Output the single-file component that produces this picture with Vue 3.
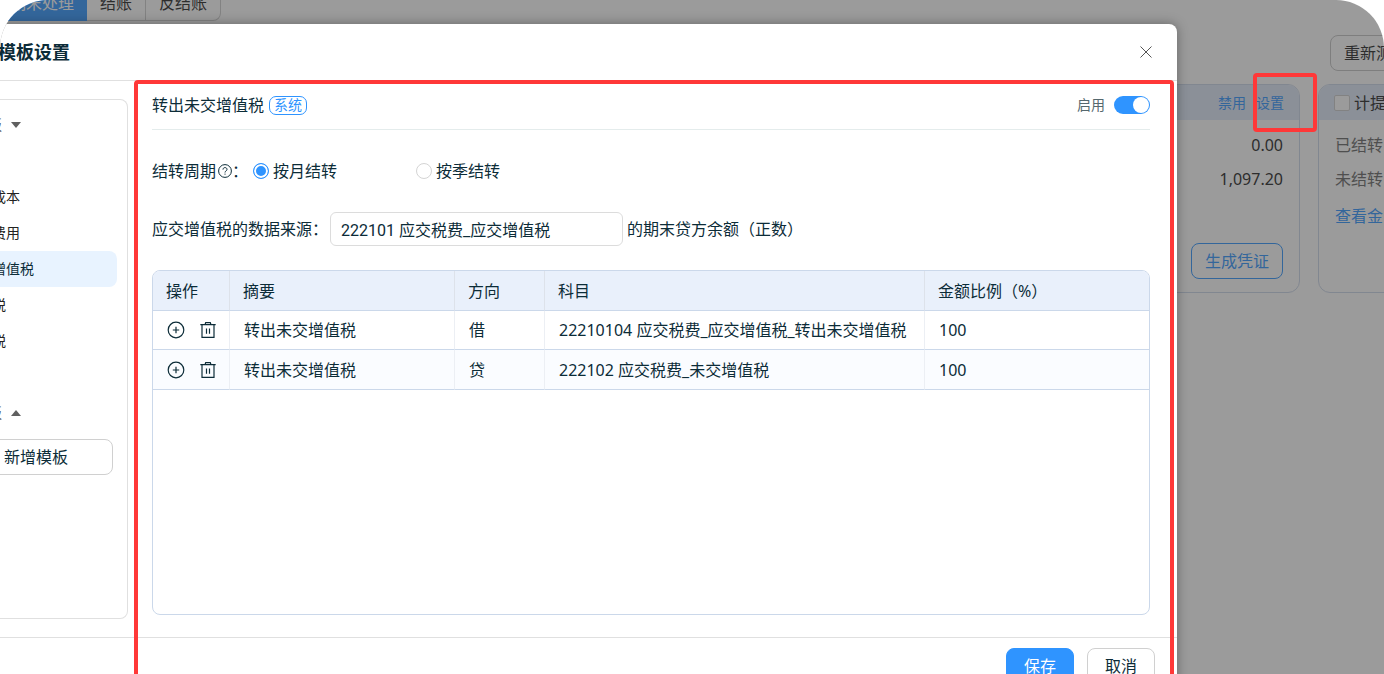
<script setup>
import { ref } from 'vue'

const enabled = ref(true)
const period = ref('month')
const source = ref('222101 应交税费_应交增值税')
const systemItems = ['成本', '费用', '增值税', '税', '税']
const activeItem = ref(2)
const rows = [
  { summary: '转出未交增值税', side: '借', subject: '22210104 应交税费_应交增值税_转出未交增值税', ratio: '100' },
  { summary: '转出未交增值税', side: '贷', subject: '222102 应交税费_未交增值税', ratio: '100' },
]
</script>

<template>
  <div class="screen">
    <div class="page">
      <nav class="tabs">
        <button class="tab on" type="button">期末处理</button>
        <button class="tab" type="button">结账</button>
        <button class="tab" type="button">反结账</button>
      </nav>
      <div class="toolbar">
        <button class="plain" type="button">重新测</button>
      </div>
      <div class="cards">
        <section class="card">
          <header class="card-head links">
            <a href="#">禁用</a>
            <a href="#">设置</a>
          </header>
          <div class="card-body amounts">
            <p>0.00</p>
            <p>1,097.20</p>
            <button class="outline" type="button">生成凭证</button>
          </div>
        </section>
        <section class="card">
          <header class="card-head">
            <label class="pick"><input type="checkbox" />计提</label>
          </header>
          <div class="card-body">
            <p class="muted">已结转</p>
            <p class="muted">未结转</p>
            <p class="more"><a href="#">查看金</a></p>
          </div>
        </section>
      </div>
    </div>

    <div class="mask">
      <div class="modal" role="dialog" aria-labelledby="dlg-title">
        <header class="modal-head">
          <h2 id="dlg-title">模板设置</h2>
          <button class="close" type="button" aria-label="关闭">
            <svg viewBox="0 0 12 12" width="12" height="12"><path d="M.5.5 11.5 11.5M11.5.5.5 11.5" /></svg>
          </button>
        </header>

        <div class="modal-body">
          <aside class="side">
            <button class="group" type="button">板
              <svg viewBox="0 0 10 6" width="10" height="6"><path d="M0 0h10L5 6z" /></svg>
            </button>
            <ul>
              <li v-for="(name, i) in systemItems" :key="i">
                <a href="#" :class="{ current: i === activeItem }" @click.prevent="activeItem = i">{{ name }}</a>
              </li>
            </ul>
            <button class="group" type="button">板
              <svg viewBox="0 0 10 6" width="10" height="6"><path d="M0 6h10L5 0z" /></svg>
            </button>
            <button class="add" type="button">新增模板</button>
          </aside>

          <main class="main">
            <div class="title-row">
              <span>转出未交增值税</span>
              <span class="tag">系统</span>
              <label class="switch">启用<input v-model="enabled" type="checkbox" role="switch" /></label>
            </div>

            <div class="period">
              <span>结转周期</span>
              <svg class="help" viewBox="0 0 14 14" width="14" height="14">
                <circle cx="7" cy="7" r="6.4" />
                <path d="M5 5.6C5 4.3 5.8 3.6 7 3.6s2 .7 2 1.8c0 1.5-2 1.5-2 3.1M7 9.6v1.1" />
              </svg>
              <span class="colon">：</span>
              <label><input v-model="period" type="radio" name="period" value="month" />按月结转</label>
              <label><input v-model="period" type="radio" name="period" value="quarter" />按季结转</label>
            </div>

            <div class="source">
              <label for="source">应交增值税的数据来源：</label>
              <input id="source" v-model="source" type="text" />
              <span>的期末贷方余额（正数）</span>
            </div>

            <div class="table-box">
              <table>
                <colgroup>
                  <col class="c-op" /><col class="c-sum" /><col class="c-side" /><col class="c-subj" /><col />
                </colgroup>
                <thead>
                  <tr><th>操作</th><th>摘要</th><th>方向</th><th>科目</th><th>金额比例（%）</th></tr>
                </thead>
                <tbody>
                  <tr v-for="(row, i) in rows" :key="i">
                    <td>
                      <div class="ops">
                        <button type="button" aria-label="新增">
                          <svg viewBox="0 0 18 18" width="18" height="18">
                            <circle cx="9" cy="9" r="7.8" /><path d="M9 5.8v6.4M5.8 9h6.4" />
                          </svg>
                        </button>
                        <button type="button" aria-label="删除">
                          <svg viewBox="0 0 18 18" width="18" height="18">
                            <path d="M1.3 3.7h15.4M6 3.6l.7-2h4.6l.7 2M3 4v12.3h12V4M7.5 7.4v5.4M10.5 7.4v5.4" />
                          </svg>
                        </button>
                      </div>
                    </td>
                    <td>{{ row.summary }}</td>
                    <td>{{ row.side }}</td>
                    <td>{{ row.subject }}</td>
                    <td>{{ row.ratio }}</td>
                  </tr>
                </tbody>
              </table>
            </div>
          </main>
        </div>

        <footer class="modal-foot">
          <button class="save" type="button">保存</button>
          <button class="cancel" type="button">取消</button>
        </footer>
        <div class="marker marker-panel"></div>
      </div>
    </div>
    <div class="marker marker-link"></div>
  </div>
</template>

<style>
body {
  background: #fff;
}
</style>

<style scoped>
* {
  box-sizing: border-box;
}
.screen {
  position: relative;
  height: 100vh;
  overflow: hidden;
  border-radius: 48px 48px 0 0;
  font: 16px/24px "Noto Sans", "Noto Sans CJK SC", sans-serif;
  color: #0c2c38;
  white-space: nowrap;
}
button,
input {
  font: inherit;
  color: inherit;
  margin: 0;
}
button {
  padding: 0;
  border: 0;
  background: none;
  cursor: pointer;
}
a {
  color: #2f94ff;
  text-decoration: none;
}
p,
h2,
ul {
  margin: 0;
  padding: 0;
}
svg {
  display: block;
  fill: none;
  stroke: currentColor;
}

/* page under the dialog */
.page {
  height: 100%;
  background: #fff;
  color: #222;
}
.tabs {
  display: flex;
  margin-top: -15px;
}
.tab {
  height: 36px;
  padding: 0 13px;
  border: 1px solid #ccc;
  border-left: 0;
}
.tab:last-child {
  border-radius: 0 8px 8px 0;
}
.tab.on {
  padding: 0 12px 0 10px;
  background: #2f94ff;
  border-color: #2f94ff;
  color: #fff;
}
.toolbar {
  display: flex;
  justify-content: flex-end;
  margin: 14px -22px 0 0;
}
.plain {
  height: 36px;
  padding: 0 13px;
  border: 1px solid #c4c4c4;
  border-radius: 8px;
}
.cards {
  display: flex;
  justify-content: flex-end;
  gap: 18px;
  margin: 13px -234px 0 0;
}
.card {
  width: 300px;
  border: 1px solid #cbd6e8;
  border-radius: 12px;
  overflow: hidden;
}
.card-head {
  display: flex;
  align-items: center;
  height: 35px;
  padding: 0 15px;
  background: #dfe9f8;
}
.links {
  justify-content: flex-end;
  gap: 10px;
  font-size: 14px;
}
.pick {
  display: flex;
  align-items: center;
  gap: 4px;
}
.pick input {
  appearance: none;
  width: 16px;
  height: 16px;
  border: 1px solid #ccc;
  border-radius: 2px;
  background: #fff;
}
.card-body {
  display: flex;
  flex-direction: column;
  gap: 10px;
  height: 172px;
  padding: 13px 16px;
}
.muted {
  color: #666;
}
.more {
  margin-top: 3px;
}
.amounts {
  align-items: flex-end;
}
.outline {
  height: 36px;
  margin-top: auto;
  padding: 0 13px;
  border: 1px solid #2f94ff;
  border-radius: 8px;
  color: #2f94ff;
}

/* dialog */
.mask {
  position: absolute;
  inset: 0;
  padding-top: 24px;
  background: rgba(55, 55, 55, 0.5);
}
.modal {
  position: relative;
  margin: 0 207px 0 -12px;
  background: #fff;
  border-radius: 0 8px 0 0;
  box-shadow: 0 0 12px rgba(0, 0, 0, 0.35);
}
.modal-head {
  display: flex;
  align-items: center;
  justify-content: space-between;
  height: 57px;
  padding: 0 25px 0 10px;
  border-bottom: 1px solid #e0e0e0;
}
.modal-head h2 {
  font-size: 18px;
  line-height: 24px;
  font-weight: 700;
}
.close {
  color: #555;
}
.modal-body {
  display: flex;
  gap: 24px;
  padding: 0 27px 18px 0;
}
.side {
  flex: none;
  width: 140px;
  margin-top: 18px;
  padding-top: 7px;
  border: 1px solid #e0e0e0;
  border-left: 0;
  border-radius: 0 8px 8px 0;
  font-size: 14px;
}
.group {
  display: flex;
  align-items: center;
  gap: 9px;
  height: 36px;
  color: #555;
}
.group svg {
  fill: #606060;
  stroke: none;
}
.side ul {
  margin: 36px 10px 36px 0;
  list-style: none;
}
.side li a {
  display: block;
  height: 36px;
  padding-left: 4px;
  border-radius: 8px;
  line-height: 36px;
  color: #222;
}
.side li a.current {
  background: #e8f3ff;
  color: #0c2c38;
}
.add {
  width: 125px;
  height: 36px;
  margin-top: 8px;
  padding-left: 15px;
  border: 1px solid #d0d0d0;
  border-radius: 8px;
  font-size: 16px;
  text-align: left;
}
.main {
  flex: 1;
  min-width: 0;
  padding-bottom: 4px;
}
.title-row {
  display: flex;
  align-items: center;
  height: 49px;
  border-bottom: 1px solid #e4ecec;
}
.tag {
  height: 19px;
  margin-left: 5px;
  padding: 0 4px;
  border: 1px solid #2f94ff;
  border-radius: 7px;
  font-size: 14px;
  line-height: 16px;
  color: #2f94ff;
}
.switch {
  display: flex;
  align-items: center;
  gap: 9px;
  margin-left: auto;
  font-size: 14px;
  color: #55686e;
}
.switch input {
  appearance: none;
  display: flex;
  width: 36px;
  height: 18px;
  padding: 1px;
  border-radius: 9px;
  background: #bbb;
}
.switch input::before {
  content: "";
  width: 16px;
  height: 16px;
  border-radius: 50%;
  background: #fff;
}
.switch input:checked {
  justify-content: flex-end;
  background: #2f94ff;
}
.period {
  display: flex;
  align-items: center;
  margin-top: 29px;
}
.help {
  margin-left: 2px;
  stroke-width: 1;
}
.colon {
  margin-right: 5px;
}
.period label {
  display: flex;
  align-items: center;
  gap: 4px;
  margin-right: 79px;
}
.period input {
  appearance: none;
  width: 16px;
  height: 16px;
  border: 1px solid #d4d4d4;
  border-radius: 50%;
  background: #fff;
}
.period input:checked {
  border-color: #2f94ff;
  background: #2f94ff;
  box-shadow: inset 0 0 0 2px #fff;
}
.source {
  display: flex;
  align-items: center;
  margin-top: 29px;
}
.source input {
  width: 293px;
  height: 34px;
  margin: 0 4px 0 2px;
  padding: 0 10px;
  border: 1px solid #dcdcdc;
  border-radius: 6px;
  background: #fff;
  font-family: Roboto, "Noto Sans CJK SC", sans-serif;
}
.table-box {
  min-height: 345px;
  margin-top: 24px;
  border: 1px solid #cbd8ea;
  border-radius: 8px;
  overflow: hidden;
}
table {
  width: 100%;
  table-layout: fixed;
  border-collapse: separate;
  border-spacing: 0;
}
.c-op {
  width: 77px;
}
.c-sum {
  width: 225px;
}
.c-side {
  width: 90px;
}
.c-subj {
  width: 380px;
}
th,
td {
  height: 40px;
  padding: 0 13px;
  border-bottom: 1px solid #cbd8ea;
  border-right: 1px solid #eceff4;
  font-weight: 400;
  text-align: left;
}
th {
  background: #e9f0fb;
  border-right-color: #dde2ea;
}
td {
  padding: 0 14px;
}
tr > :last-child {
  border-right: 0;
}
tbody tr:first-child td {
  height: 39px;
}
tbody tr:nth-child(even) {
  background: #fafcff;
}
.ops {
  display: flex;
  gap: 14px;
}
.ops svg {
  stroke-width: 1.2;
}
.modal-foot {
  display: flex;
  justify-content: flex-end;
  gap: 13px;
  padding: 10px 22px 20px 0;
  border-top: 1px solid #e0e0e0;
}
.modal-foot button {
  width: 68px;
  height: 36px;
  border: 1px solid #d0d0d0;
  border-radius: 8px;
}
.modal-foot .save {
  background: #2f94ff;
  border-color: #2f94ff;
  color: #fff;
}

/* red callout frames over the content */
.marker {
  position: absolute;
  border: 4px solid #ff3838;
  border-radius: 4px;
  pointer-events: none;
}
.marker-panel {
  inset: 56px 3px -20px 146px;
}
.marker-link {
  top: 73px;
  right: 67px;
  width: 64px;
  height: 59px;
}
</style>
